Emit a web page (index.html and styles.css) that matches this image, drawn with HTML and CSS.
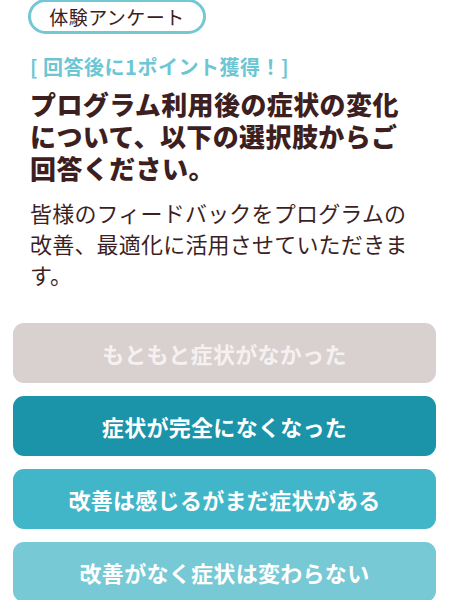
FILE: index.html
```html
<!DOCTYPE html>
<html lang="ja">
<head>
    <meta charset="UTF-8">
    <meta name="viewport" content="width=device-width, initial-scale=1.0">
    <title>体験アンケート</title>
    <link rel="stylesheet" href="styles.css">
</head>
<body>
    <div class="survey">
        <div class="intro">
            <span class="tag">体験アンケート</span>
            <p class="bonus">[ 回答後に1ポイント獲得！]</p>
            <h1>プログラム利用後の症状の変化について、以下の選択肢からご回答ください。</h1>
            <p class="note">皆様のフィードバックをプログラムの改善、最適化に活用させていただきます。</p>
        </div>
        <div class="choices">
            <button class="choice none">もともと症状がなかった</button>
            <button class="choice best">症状が完全になくなった</button>
            <button class="choice better">改善は感じるがまだ症状がある</button>
            <button class="choice same">改善がなく症状は変わらない</button>
        </div>
    </div>
</body>
</html>
```

FILE: styles.css
```css
body {
    margin: 0;
    font-family: "Noto Sans CJK JP", "Noto Sans", sans-serif;
    background: #fff;
    color: #3d1f1f;
}
.survey {
    padding: 0 14px 0 13px;
}
.intro {
    padding: 0 23px 0 17px;
}
.tag {
    display: inline-block;
    box-sizing: border-box;
    margin-top: -1px;
    margin-left: -2px;
    width: 178px;
    height: 35px;
    line-height: 30px;
    border: 3px solid #74c8d4;
    border-radius: 18px;
    text-align: center;
    font-size: 19px;
    letter-spacing: 0.5px;
    color: #3b2020;
}
.bonus {
    margin: 21px 0 0;
    font-size: 20px;
    line-height: 24px;
    font-weight: 700;
    letter-spacing: 0.5px;
    color: #6cc6d3;
}
h1 {
    margin: 9px 0 0;
    font-size: 26px;
    line-height: 32px;
    font-weight: 900;
    letter-spacing: 0.4px;
}
.note {
    margin: 13px 0 0;
    font-size: 22px;
    line-height: 31px;
    letter-spacing: 0.2px;
}
.choices {
    display: flex;
    flex-direction: column;
    gap: 13px;
    margin-top: 33px;
}
.choice {
    height: 60px;
    border: none;
    border-radius: 11px;
    font-family: inherit;
    font-size: 22px;
    font-weight: 700;
    letter-spacing: 0.3px;
    color: #fff;
    cursor: pointer;
}
.choice.none {
    background: #d9d0d0;
    color: #f5f1f1;
}
.choice.best {
    background: #1b93a9;
}
.choice.better {
    background: #42b6c9;
}
.choice.same {
    background: #77c9d5;
}
```
